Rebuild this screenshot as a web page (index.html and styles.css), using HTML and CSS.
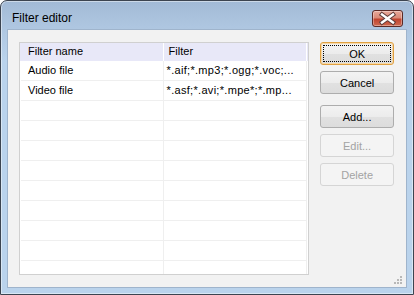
FILE: index.html
```html
<!DOCTYPE html>
<html>
<head>
<meta charset="utf-8">
<link rel="stylesheet" href="styles.css">
</head>
<body>
<div class="window">
  <div class="titlebar">
    <span class="title">Filter editor</span>
    <div class="close">
      <svg width="31" height="17" viewBox="0 0 31 17">
        <path d="M10 4.5 L21 12.5 M21 4.5 L10 12.5" stroke="#5a3a38" stroke-width="4.4" stroke-linecap="square" fill="none"/>
        <path d="M10 4.5 L21 12.5 M21 4.5 L10 12.5" stroke="#ffffff" stroke-width="2.4" stroke-linecap="square" fill="none"/>
      </svg>
    </div>
  </div>
  <div class="client">
    <div class="list">
      <div class="row head">
        <div class="c1">Filter name</div>
        <div class="c2">Filter</div>
      </div>
      <div class="row">
        <div class="c1">Audio file</div>
        <div class="c2">*.aif;*.mp3;*.ogg;*.voc;...</div>
      </div>
      <div class="row">
        <div class="c1">Video file</div>
        <div class="c2">*.asf;*.avi;*.mpe*;*.mp...</div>
      </div>
      <div class="row"><div class="c1"></div><div class="c2"></div></div>
      <div class="row"><div class="c1"></div><div class="c2"></div></div>
      <div class="row"><div class="c1"></div><div class="c2"></div></div>
      <div class="row"><div class="c1"></div><div class="c2"></div></div>
      <div class="row"><div class="c1"></div><div class="c2"></div></div>
      <div class="row"><div class="c1"></div><div class="c2"></div></div>
      <div class="row"><div class="c1"></div><div class="c2"></div></div>
      <div class="row"><div class="c1"></div><div class="c2"></div></div>
      <div class="row last"><div class="c1"></div><div class="c2"></div></div>
    </div>
    <div class="buttons">
      <div class="btn default"><span>OK</span></div>
      <div class="btn gap-s">Cancel</div>
      <div class="btn gap-l">Add...</div>
      <div class="btn gap-s disabled">Edit...</div>
      <div class="btn gap-s disabled">Delete</div>
    </div>
    <svg class="grip" width="8" height="8" viewBox="0 0 8 8">
      <g fill="#b8b8b8">
        <rect x="6" y="0" width="2" height="2"/>
        <rect x="3" y="3" width="2" height="2"/><rect x="6" y="3" width="2" height="2"/>
        <rect x="0" y="6" width="2" height="2"/><rect x="3" y="6" width="2" height="2"/><rect x="6" y="6" width="2" height="2"/>
      </g>
    </svg>
  </div>
</div>
</body>
</html>
```
FILE: styles.css
```css
html, body {
  margin: 0;
  padding: 0;
  background: #ffffff;
}
body {
  width: 414px;
  height: 295px;
  overflow: hidden;
  font-family: "Liberation Sans", Arial, sans-serif;
}
.window {
  box-sizing: border-box;
  width: 414px;
  height: 295px;
  border: 1px solid #3c4450;
  border-radius: 7px 7px 0 0;
  background: linear-gradient(#a2bad6 0px, #b0c8e2 30px, #bad3ec 60px, #bad3ec 100%);
  display: flex;
  flex-direction: column;
  box-shadow: inset 0 0 0 1px rgba(255,255,255,0.45);
}
.titlebar {
  height: 29px;
  display: flex;
  align-items: flex-start;
  justify-content: space-between;
  padding: 0 10px 0 11px;
}
.title {
  font-size: 12px;
  color: #000;
  margin-top: 10px;
  line-height: 14px;
}
.close {
  margin-top: 9px;
  width: 31px;
  height: 17px;
  box-sizing: border-box;
  border: 1px solid #5b2a26;
  border-radius: 3px;
  background: linear-gradient(#e8a89a 0%, #d98a78 45%, #c0442f 55%, #cf6a50 100%);
  box-shadow: inset 0 0 0 1px rgba(255,255,255,0.35);
  display: flex;
  align-items: center;
  justify-content: center;
}
.close svg {
  display: block;
  margin: -1px;
}
.client {
  position: relative;
  height: 257px;
  margin: 0 7px;
  background: #f2f2f2;
  display: flex;
  padding: 12px 12px 12px 11px;
  box-sizing: border-box;
  gap: 11px;
  outline: 1px solid #9fb4cc;
}
.list {
  width: 291px;
  height: 233px;
  box-sizing: border-box;
  border: 1px solid #d0d0d0;
  background: #fff;
  padding: 0 1px;
  overflow: hidden;
  font-size: 11px;
  color: #000;
}
.row {
  display: flex;
  height: 20px;
  box-sizing: border-box;
  border-bottom: 1px solid #efefef;
}
.row.head {
  height: 18px;
  background: #e8e8f8;
  border-bottom: none;
  margin: 0 -1px;
  padding: 0 1px;
}
.row.last {
  border-bottom: none;
}
.c1 {
  width: 143px;
  box-sizing: border-box;
  border-right: 1px solid #efefef;
  padding-left: 7px;
  line-height: 19px;
  white-space: nowrap;
}
.c2 {
  width: 144px;
  box-sizing: border-box;
  border-right: 1px solid #efefef;
  padding-left: 3px;
  line-height: 19px;
  white-space: nowrap;
  overflow: hidden;
  letter-spacing: 0.3px;
}
.head .c1, .head .c2 {
  line-height: 17px;
  border-right-color: #ffffff;
}
.head .c2 {
  padding-left: 5px;
  letter-spacing: 0;
}
.buttons {
  display: flex;
  flex-direction: column;
  width: 74px;
}
.btn {
  height: 23px;
  box-sizing: border-box;
  border: 1px solid #adadad;
  border-radius: 3px;
  background: linear-gradient(#f3f3f3 0%, #ececec 50%, #e1e1e1 51%, #dcdcdc 100%);
  display: flex;
  align-items: center;
  justify-content: center;
  font-size: 11px;
  color: #000;
}
.btn.default {
  border-color: #e0a040;
  box-shadow: inset 0 0 0 1px #f6d8a8;
}
.btn.default span {
  display: flex;
  align-items: center;
  justify-content: center;
  width: 68px;
  height: 17px;
  box-sizing: border-box;
  border: 1px dotted #000;
}
.gap-s { margin-top: 6px; }
.gap-l { margin-top: 11px; }
.btn.disabled {
  border-color: #d5d5d5;
  background: #f4f4f4;
  color: #a3a3a3;
}
.grip {
  position: absolute;
  right: 4px;
  bottom: 3px;
}
```
